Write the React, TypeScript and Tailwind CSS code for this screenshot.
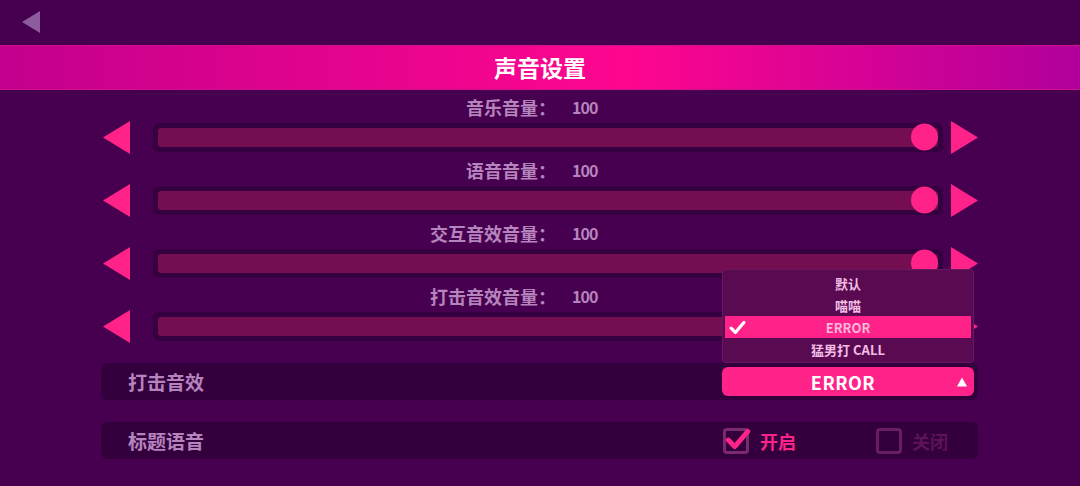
import React from "react";

const FONT = { fontFamily: '"Noto Sans CJK SC", "Noto Sans", sans-serif' };

function TriLeft({ className }: { className: string }) {
  return (
    <svg viewBox="0 0 27 33" className={className}>
      <polygon points="27,0 27,33 0,16.5" fill="currentColor" />
    </svg>
  );
}

function TriRight({ className }: { className: string }) {
  return (
    <svg viewBox="0 0 27 33" className={className}>
      <polygon points="0,0 0,33 27,16.5" fill="currentColor" />
    </svg>
  );
}

function Slider({ label, value }: { label: string; value: number }) {
  return (
    <div className="mb-[3px]">
      <div className="h-[26px] flex items-center text-[18px] font-bold text-[#b684bd] leading-none">
        <span className="w-[556px] text-right">{label}：</span>
        <span className="ml-[16px] text-[16px] tracking-[-1px]">{value}</span>
      </div>
      <div className="h-[34px] flex items-center pl-[103px]">
        <TriLeft className="w-[27px] h-[33px] text-[#ff2288]" />
        <div className="relative ml-[23px] w-[790px] h-[29px] rounded-[6px] bg-[#35003f] p-[5px]">
          <div className="w-full h-full rounded-[3px] bg-[#750e50]" />
          <div
            className="absolute top-1/2 -translate-y-1/2 w-[27px] h-[27px] rounded-full bg-[#ff2288]"
            style={{ left: `${(value / 100) * 758}px` }}
          />
        </div>
        <TriRight className="ml-[8px] w-[27px] h-[33px] text-[#ff2288]" />
      </div>
    </div>
  );
}

function Check({ className }: { className: string }) {
  return (
    <svg viewBox="0 0 24 24" className={className}>
      <path
        d="M3 13 L9 19 L21 5"
        fill="none"
        stroke="currentColor"
        strokeWidth="4.5"
        strokeLinecap="round"
        strokeLinejoin="round"
      />
    </svg>
  );
}

const OPTIONS = ["默认", "喵喵", "ERROR", "猛男打 CALL"];

export default function App() {
  const selected = "ERROR";
  return (
    <div
      className="w-[1080px] h-[486px] overflow-hidden bg-[#47004f] flex flex-col"
      style={FONT}
    >
      {/* top bar with back button */}
      <div className="h-[45px] flex items-center pl-[22px]">
        <TriLeft className="w-[18px] h-[22px] -mt-[2px] text-[#8c5c9c]" />
      </div>

      {/* section title */}
      <div className="h-[45px] flex items-center justify-center bg-[linear-gradient(90deg,#c2008d_0%,#ff068f_58%,#b0009b_100%)] border-y border-[#d0108a]">
        <span className="text-[23px] font-bold text-white leading-none">声音设置</span>
      </div>

      <div className="pt-[4px]">
        <Slider label="音乐音量" value={100} />
        <Slider label="语音音量" value={100} />
        <Slider label="交互音效音量" value={100} />
        <Slider label="打击音效音量" value={100} />
      </div>

      {/* hit sound select */}
      <div className="mt-[17px] ml-[101px] w-[877px] h-[37px] rounded-[6px] bg-[#33003d] flex items-center pl-[27px] pr-[4px]">
        <span className="text-[19px] font-bold text-[#b684bd] leading-none">打击音效</span>
        <div className="ml-auto relative w-[252px] h-[29px]">
          <div className="absolute bottom-full mb-[4px] left-0 w-[252px] rounded-[4px] bg-[#5a0a50] border border-[#6b1862] p-[2px]">
            {OPTIONS.map((o) => {
              const on = o === selected;
              return (
                <div
                  key={o}
                  className={
                    "relative h-[22px] flex items-center justify-center text-[13px] font-bold leading-none " +
                    (on ? "bg-[#ff2288] text-[#f8b6dc]" : "text-[#f2bde6]")
                  }
                >
                  {on && <Check className="absolute left-[4px] w-[17px] h-[17px] text-white" />}
                  {o}
                </div>
              );
            })}
          </div>
          <div className="relative w-full h-full rounded-[6px] bg-[#ff2288] flex items-center justify-center">
            <span className="text-[18px] font-bold text-white leading-none tracking-[0.5px] -ml-[10px]">
              {selected}
            </span>
            <span className="absolute right-[7px] top-1/2 -translate-y-1/2 w-0 h-0 border-l-[5px] border-r-[5px] border-b-[9px] border-l-transparent border-r-transparent border-b-white" />
          </div>
        </div>
      </div>

      {/* title voice toggle */}
      <div className="mt-[22px] ml-[101px] w-[877px] h-[37px] rounded-[6px] bg-[#33003d] flex items-center pl-[27px]">
        <span className="text-[19px] font-bold text-[#b684bd] leading-none">标题语音</span>
        <div className="ml-[519px] flex items-center">
          <div className="relative w-[26px] h-[26px] rounded-[4px] border-[3px] border-[#7a2a6e]">
            <Check className="absolute -left-[1px] -top-[5px] w-[26px] h-[26px] text-[#ff2288]" />
          </div>
          <span className="ml-[11px] text-[18px] font-bold text-[#ff2288] leading-none">开启</span>
        </div>
        <div className="ml-[80px] flex items-center">
          <div className="w-[26px] h-[26px] rounded-[4px] border-[3px] border-[#6a1e62]" />
          <span className="ml-[10px] text-[18px] font-bold text-[#5e1258] leading-none">关闭</span>
        </div>
      </div>
    </div>
  );
}
